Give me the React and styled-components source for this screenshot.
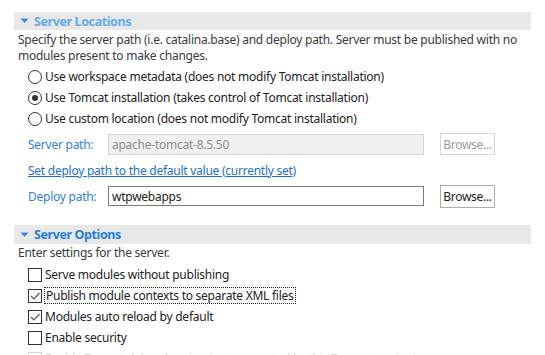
import React from "react";
import styled, { createGlobalStyle } from "styled-components";

const Global = createGlobalStyle`
  html, body { margin: 0; padding: 0; background: #fff; }
  body { font-family: "Noto Sans", "Open Sans", sans-serif; font-size: 12px; color: #2b2b2b; }
`;

const Page = styled.div`
  width: 545px;
  height: 355px;
  overflow: hidden;
  padding: 12px 14px 0 14px;
  box-sizing: border-box;
  display: flex;
  flex-direction: column;
`;

const Section = styled.section`
  display: flex;
  flex-direction: column;
  flex: none;
  margin-bottom: ${(p) => p.$mb || 0}px;
`;

const Header = styled.div`
  width: 517px;
  height: ${(p) => p.$h || 18}px;
  background: #e8e8e8;
  display: flex;
  align-items: center;
  gap: 5px;
  padding-left: 6px;
  box-sizing: border-box;
  flex: none;
`;

const Title = styled.span`
  font-weight: 700;
  font-size: 12.5px;
  color: ${(p) => p.$color};
  letter-spacing: -0.4px;
`;

const Desc = styled.div`
  padding-left: 4px;
  margin-top: ${(p) => p.$mt || 0}px;
  line-height: 16px;
  color: #3a3a3a;
  letter-spacing: -0.25px;
`;

const Options = styled.div`
  display: flex;
  flex-direction: column;
  padding-left: 14px;
  margin-top: ${(p) => p.$mt || 0}px;
`;

const OptRow = styled.label`
  height: 21px;
  flex: none;
  display: flex;
  align-items: center;
  gap: 3px;
  color: ${(p) => (p.$faded ? "#d4d4d4" : "#222")};
  letter-spacing: -0.25px;
  white-space: nowrap;
`;

const Radio = styled.span`
  width: 12px;
  height: 12px;
  border: 1px solid #333;
  border-radius: 50%;
  box-sizing: content-box;
  display: flex;
  align-items: center;
  justify-content: center;
  flex: none;
  &::after {
    content: "";
    width: 6px;
    height: 6px;
    border-radius: 50%;
    background: #333;
    display: ${(p) => (p.$on ? "block" : "none")};
  }
`;

const Box = styled.span`
  width: 12px;
  height: 12px;
  border: 1px solid ${(p) => (p.$faded ? "#d8d8d8" : "#333")};
  box-sizing: content-box;
  display: flex;
  align-items: center;
  justify-content: center;
  flex: none;
`;

const Focus = styled.span`
  outline: 1px dotted #222;
  outline-offset: 0px;
  padding: 0 1px;
  line-height: 15px;
`;

const FieldRow = styled.div`
  display: flex;
  align-items: center;
  height: 22px;
  flex: none;
  margin-top: ${(p) => p.$mt || 0}px;
`;

const FieldLabel = styled.span`
  width: 80px;
  color: #3480d0;
  letter-spacing: -0.25px;
`;

const Input = styled.div`
  width: 316px;
  height: ${(p) => (p.$disabled ? 21 : 20)}px;
  box-sizing: border-box;
  border: 1px solid ${(p) => (p.$disabled ? "#d6d6d6" : "#7a7a7a")};
  background: ${(p) => (p.$disabled ? "#f0f0f0" : "#fff")};
  color: ${(p) => (p.$disabled ? "#8d8d8d" : "#222")};
  display: flex;
  align-items: center;
  padding-left: 3px;
  letter-spacing: -0.25px;
`;

const Button = styled.div`
  margin-left: 16px;
  width: 55px;
  height: ${(p) => (p.$disabled ? 22 : 23)}px;
  box-sizing: border-box;
  border: 1px solid ${(p) => (p.$disabled ? "#d4d4d4" : "#adadad")};
  background: #fff;
  color: ${(p) => (p.$disabled ? "#9a9a9a" : "#222")};
  display: flex;
  align-items: center;
  justify-content: center;
  letter-spacing: -0.3px;
`;

const Link = styled.a`
  color: #1e6fc8;
  text-decoration: underline;
  letter-spacing: -0.25px;
  height: 30px;
  flex: none;
  display: flex;
  align-items: center;
  align-self: flex-start;
`;

const Caret = () => (
  <svg width="9" height="6" viewBox="0 0 9 6">
    <path d="M0.5 0.5 L8.5 0.5 L4.5 5 Z" fill="#3a8ad8" />
  </svg>
);

const Check = () => (
  <svg width="12" height="12" viewBox="0 0 12 12">
    <path d="M2 6 L5 9 L10.5 3" fill="none" stroke="#555" strokeWidth="1.2" />
  </svg>
);

export default function App() {
  return (
    <>
      <Global />
      <Page>
        <Section $mb={18}>
          <Header>
            <Caret />
            <Title $color="#62ace9">Server Locations</Title>
          </Header>
          <Desc $mt={2}>
            Specify the server path (i.e. catalina.base) and deploy path. Server must be published with no
            <br />
            modules present to make changes.
          </Desc>
          <Options $mt={2}>
            <OptRow>
              <Radio />
              <span>Use workspace metadata (does not modify Tomcat installation)</span>
            </OptRow>
            <OptRow>
              <Radio $on />
              <span>Use Tomcat installation (takes control of Tomcat installation)</span>
            </OptRow>
            <OptRow>
              <Radio />
              <span>Use custom location (does not modify Tomcat installation)</span>
            </OptRow>
            <FieldRow $mt={4}>
              <FieldLabel>Server path:</FieldLabel>
              <Input $disabled>apache-tomcat-8.5.50</Input>
              <Button $disabled>Browse...</Button>
            </FieldRow>
            <Link>Set deploy path to the default value (currently set)</Link>
            <FieldRow>
              <FieldLabel>Deploy path:</FieldLabel>
              <Input>wtpwebapps</Input>
              <Button>Browse...</Button>
            </FieldRow>
          </Options>
        </Section>
        <Section>
          <Header $h={19}>
            <Caret />
            <Title $color="#1f7fd6">Server Options</Title>
          </Header>
          <Desc $mt={1}>Enter settings for the server.</Desc>
          <Options $mt={3}>
            <OptRow>
              <Box />
              <span>Serve modules without publishing</span>
            </OptRow>
            <OptRow>
              <Box>
                <Check />
              </Box>
              <Focus>Publish module contexts to separate XML files</Focus>
            </OptRow>
            <OptRow>
              <Box>
                <Check />
              </Box>
              <span>Modules auto reload by default</span>
            </OptRow>
            <OptRow>
              <Box />
              <span>Enable security</span>
            </OptRow>
            <OptRow $faded>
              <Box $faded />
              <span>Enable Tomcat debug logging (not supported by this Tomcat version)</span>
            </OptRow>
          </Options>
        </Section>
      </Page>
    </>
  );
}
